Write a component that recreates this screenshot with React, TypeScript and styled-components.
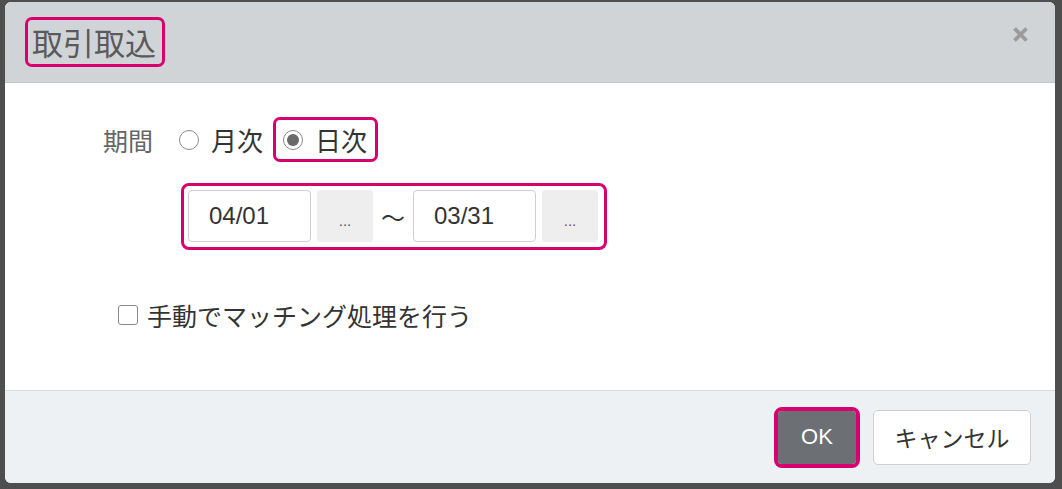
import React from "react";
import styled, { createGlobalStyle } from "styled-components";

const Global = createGlobalStyle`
  html, body { margin: 0; padding: 0; }
  body {
    background: #4e4e4e;
    font-family: "Noto Sans CJK JP", "Noto Sans", sans-serif;
    width: 1062px;
    height: 489px;
    overflow: hidden;
  }
`;

const PINK = "#d6006e";

const Frame = styled.div`
  padding: 2px 7px 6px 5px;
  box-sizing: border-box;
  width: 1062px;
  height: 489px;
`;

const Dialog = styled.div`
  width: 1050px;
  height: 481px;
  background: #fff;
  border-radius: 6px;
  overflow: hidden;
  display: flex;
  flex-direction: column;
`;

const Header = styled.div`
  height: 80px;
  flex: none;
  background: #d1d4d7;
  border-bottom: 1px solid #c4c7ca;
  display: flex;
  align-items: center;
  justify-content: space-between;
  padding: 0 26px 0 20px;
`;

const Highlight = styled.div<{ $pad?: string; $radius?: number }>`
  display: inline-flex;
  align-items: center;
  border: 3px solid ${PINK};
  border-radius: ${(p) => p.$radius ?? 7}px;
  padding: ${(p) => p.$pad ?? "0"};
  box-sizing: border-box;
`;

const Title = styled.h1`
  margin: 0;
  font-weight: 400;
  font-size: 31px;
  line-height: 44px;
  color: #5a5a5a;
`;

const Close = styled.button`
  border: none;
  background: transparent;
  padding: 0;
  width: 17px;
  height: 17px;
  align-self: flex-start;
  margin-top: 24px;
  display: flex;
`;

const Body = styled.div`
  flex: 1;
  display: flex;
  flex-direction: column;
  align-items: flex-start;
  padding-top: 34px;
`;

const PeriodRow = styled.div`
  display: flex;
  align-items: center;
  padding-left: 98px;
  height: 45px;
`;

const Label = styled.span`
  font-size: 25px;
  color: #666;
  margin-right: 26px;
`;

const RadioItem = styled.label`
  display: inline-flex;
  align-items: center;
  gap: 12px;
  font-size: 26px;
  color: #333;
`;

const RadioCircle = styled.span<{ $checked?: boolean }>`
  width: 20px;
  height: 20px;
  border-radius: 50%;
  border: 1.5px solid #8a8a8a;
  box-sizing: border-box;
  background: #fff;
  display: inline-flex;
  align-items: center;
  justify-content: center;
  &::after {
    content: "";
    width: 12px;
    height: 12px;
    border-radius: 50%;
    background: ${(p) => (p.$checked ? "#6a6a6a" : "transparent")};
  }
`;

const DateRow = styled.div`
  margin-top: 21px;
  margin-left: 176px;
`;

const DateGroup = styled.div`
  display: flex;
  align-items: center;
  gap: 6px;
`;

const DateInput = styled.div`
  width: 123px;
  height: 52px;
  box-sizing: border-box;
  border: 1px solid #cfcfcf;
  border-radius: 4px;
  background: #fff;
  font-family: "Liberation Sans", Arial, sans-serif;
  font-size: 24px;
  color: #333;
  display: flex;
  align-items: center;
  padding-left: 20px;
`;

const PickButton = styled.button`
  width: 56px;
  height: 52px;
  border: none;
  border-radius: 4px;
  background: #eeeeee;
  color: #555;
  font-family: "Liberation Sans", Arial, sans-serif;
  font-size: 15px;
  padding: 8px 0 0 0;
`;

const Tilde = styled.span`
  font-size: 24px;
  color: #333;
  margin: 0 2px;
`;

const CheckRow = styled.label`
  display: flex;
  align-items: center;
  gap: 9px;
  margin-top: 47px;
  margin-left: 113px;
  font-size: 25px;
  color: #333;
`;

const CheckBox = styled.span`
  width: 20px;
  height: 20px;
  box-sizing: border-box;
  border: 1.5px solid #8a8a8a;
  border-radius: 3px;
  background: #fff;
`;

const Footer = styled.div`
  height: 93px;
  flex: none;
  box-sizing: border-box;
  background: #eef1f4;
  border-top: 1px solid #dadde0;
  display: flex;
  align-items: center;
  justify-content: flex-end;
  padding-right: 24px;
  gap: 13px;
`;

const OkButton = styled.button`
  width: 78px;
  height: 53px;
  border: none;
  border-radius: 4px;
  background: #6c7074;
  color: #fff;
  font-family: "Liberation Sans", Arial, sans-serif;
  font-size: 22px;
  padding: 0;
`;

const CancelButton = styled.button`
  width: 158px;
  height: 55px;
  border: 1px solid #cfcfcf;
  border-radius: 5px;
  background: #fff;
  color: #333;
  font-family: "Noto Sans CJK JP", sans-serif;
  font-size: 23px;
  padding: 0;
`;

export default function App() {
  return (
    <>
      <Global />
      <Frame>
        <Dialog>
          <Header>
            <Highlight $pad="0 6px 0 4px" style={{ height: 50 }}>
              <Title>取引取込</Title>
            </Highlight>
            <Close aria-label="close">
              <svg width="17" height="17" viewBox="0 0 17 17">
                <path d="M2.5 2.5 L14.5 14.5 M14.5 2.5 L2.5 14.5" stroke="#9b9b9b" strokeWidth="3.8" strokeLinecap="butt" />
              </svg>
            </Close>
          </Header>
          <Body>
            <PeriodRow>
              <Label>期間</Label>
              <RadioItem>
                <RadioCircle />
                月次
              </RadioItem>
              <Highlight $pad="0 8px 0 7px" style={{ height: 45, marginLeft: 10 }}>
                <RadioItem>
                  <RadioCircle $checked />
                  日次
                </RadioItem>
              </Highlight>
            </PeriodRow>
            <DateRow>
              <Highlight $pad="4px 6px 5px 4px" $radius={8}>
                <DateGroup>
                  <DateInput>04/01</DateInput>
                  <PickButton>...</PickButton>
                  <Tilde>〜</Tilde>
                  <DateInput>03/31</DateInput>
                  <PickButton>...</PickButton>
                </DateGroup>
              </Highlight>
            </DateRow>
            <CheckRow>
              <CheckBox />
              手動でマッチング処理を行う
            </CheckRow>
          </Body>
          <Footer>
            <Highlight $pad="0" $radius={8} style={{ borderWidth: 4 }}>
              <OkButton>OK</OkButton>
            </Highlight>
            <CancelButton>キャンセル</CancelButton>
          </Footer>
        </Dialog>
      </Frame>
    </>
  );
}
